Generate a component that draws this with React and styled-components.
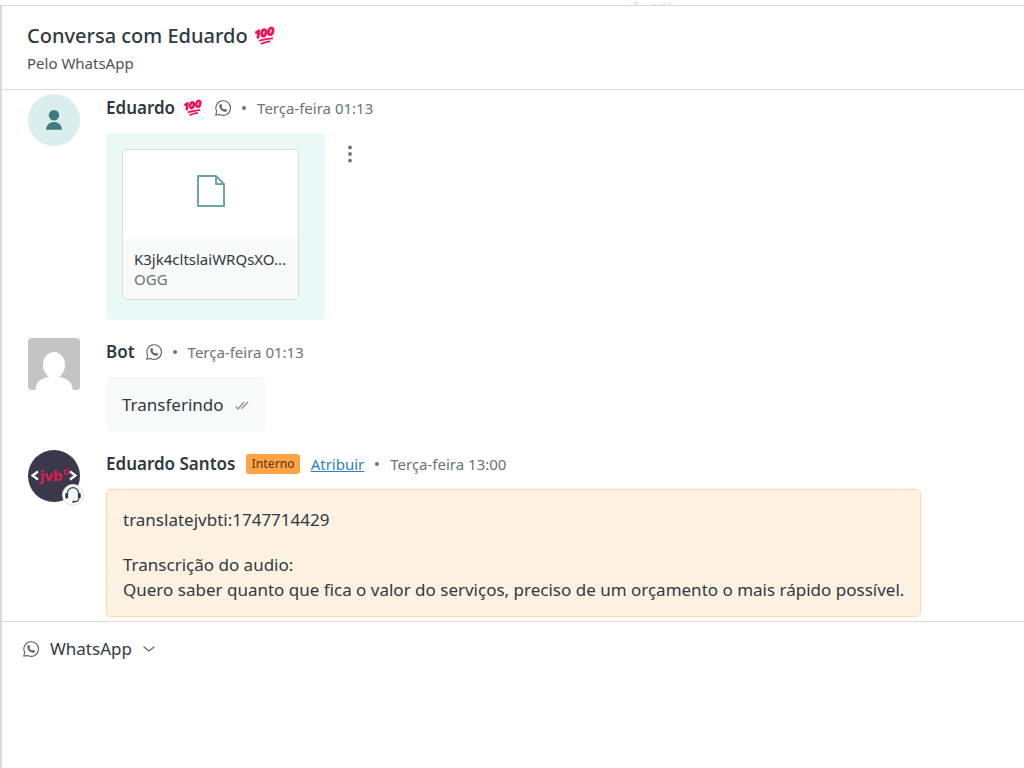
import React from "react";
import styled, { createGlobalStyle } from "styled-components";

const GlobalStyle = createGlobalStyle`
  * {
    box-sizing: border-box;
  }
  body {
    margin: 0;
    background: #ffffff;
    color: #2f3941;
    font-family: "Noto Sans", "Open Sans", sans-serif;
    font-size: 17px;
  }
  h1, h2, p {
    margin: 0;
  }
`;

const Page = styled.div`
  min-height: 100vh;
  display: flex;
  flex-direction: column;
`;

const TopStrip = styled.div`
  height: 5px;
  display: flex;
  justify-content: center;
  padding-left: 280px;
`;

const Panel = styled.main`
  flex: 1;
  display: flex;
  flex-direction: column;
  border-top: 1px solid #d8dcde;
  border-left: 2px solid #d8dcde;
`;

const Header = styled.header`
  padding: 16px 25px 13px;
  border-bottom: 1px solid #d8dcde;
`;

const Title = styled.h1`
  display: flex;
  align-items: center;
  gap: 7px;
  font-size: 20px;
  line-height: 28px;
  font-weight: 500;
`;

const Subtitle = styled.p`
  font-size: 15px;
  line-height: 26px;
  color: #49545c;
`;

const Messages = styled.section`
  display: flex;
  flex-direction: column;
  gap: 18px;
  padding: 4px 26px;
  border-bottom: 1px solid #d8dcde;
`;

const Message = styled.article`
  display: flex;
  align-items: flex-start;
  gap: 26px;
`;

const Avatar = styled.div`
  position: relative;
  flex: none;
  width: 52px;
  height: 52px;
  display: flex;
  align-items: center;
  justify-content: center;
  border-radius: ${(props) => (props.$square ? "4px" : "50%")};
  background: ${(props) => props.$color};
`;

const Badge = styled.div`
  position: absolute;
  right: -4px;
  bottom: -4px;
  width: 22px;
  height: 22px;
  display: flex;
  align-items: center;
  justify-content: center;
  border: 1px solid #e3e6e8;
  border-radius: 50%;
  background: #f8f9f9;
`;

const Body = styled.div`
  min-width: 0;
  display: flex;
  flex-direction: column;
  align-items: flex-start;
  gap: 11px;
`;

const Meta = styled.div`
  display: flex;
  align-items: center;
  gap: 11px;
  height: 28px;
`;

const Name = styled.h2`
  display: flex;
  align-items: center;
  gap: 9px;
  font-size: 17px;
  line-height: 28px;
  font-weight: 600;
`;

const Dot = styled.span`
  width: 4px;
  height: 4px;
  border-radius: 50%;
  background: #68737d;
`;

const Time = styled.time`
  font-size: 15px;
  line-height: 20px;
  color: #68737d;
`;

const Tag = styled.span`
  padding: 0 5px;
  border-radius: 3px;
  background: #ffa445;
  color: #703b15;
  font-size: 12px;
  line-height: 20px;
  font-weight: 500;
`;

const AssignLink = styled.a`
  color: #2f7fc1;
  font-size: 15px;
  line-height: 20px;
`;

const Row = styled.div`
  display: flex;
  align-items: flex-start;
  gap: 16px;
`;

const FileBubble = styled.div`
  padding: 16px 26px 20px 16px;
  border-radius: 5px;
  background: #eaf8f8;
`;

const FileCard = styled.div`
  width: 177px;
  overflow: hidden;
  border: 1px solid #d8dcde;
  border-radius: 5px;
  background: #ffffff;
`;

const FilePreview = styled.div`
  height: 89px;
  display: flex;
  align-items: center;
  justify-content: center;
  padding-bottom: 7px;
`;

const FileInfo = styled.div`
  padding: 10px 11px;
  background: #f8f9f9;
  font-size: 15px;
  line-height: 20px;
`;

const FileName = styled.p`
  overflow: hidden;
  white-space: nowrap;
  text-overflow: ellipsis;
`;

const FileType = styled.p`
  color: #68737d;
`;

const MenuButton = styled.button`
  display: flex;
  padding: 11px 6px;
  border: 0;
  background: none;
`;

const BotBubble = styled.div`
  display: flex;
  align-items: center;
  gap: 11px;
  padding: 15px 16px;
  border-radius: 5px;
  background: #f8f9f9;
  line-height: 25px;
`;

const NoteBubble = styled.div`
  display: flex;
  flex-direction: column;
  gap: 20px;
  padding: 17px 16px 14px;
  border: 1px solid #ffd6a4;
  border-radius: 5px;
  background: #fff2e2;
  line-height: 25px;
`;

const Composer = styled.form`
  flex: 1;
  display: flex;
  flex-direction: column;
  padding: 12px 21px;
`;

const Channel = styled.label`
  display: flex;
  align-items: center;
  align-self: flex-start;
  gap: 11px;
`;

const ChannelSelect = styled.select`
  appearance: none;
  padding: 0;
  border: 0;
  background: none;
  color: #2f3941;
  font: inherit;
  line-height: 30px;
`;

const Reply = styled.textarea`
  flex: 1;
  width: 100%;
  margin-top: 12px;
  padding: 0;
  border: 0;
  outline: 0;
  resize: none;
  background: none;
  font: inherit;
`;

const Hundred = ({ size }) => (
  <svg width={size + 2} height={size} viewBox="0 0 22 20" fill="none" stroke="#f3125a" strokeLinecap="round" aria-label="100">
    <path d="M1.4 6.4 3.8 4.8 3 11.4" strokeWidth="2.8" strokeLinejoin="round" />
    <ellipse cx="8.8" cy="6.9" rx="2" ry="3.3" strokeWidth="2.8" transform="rotate(17 8.8 6.9)" />
    <ellipse cx="15.8" cy="5.3" rx="2.1" ry="3.4" strokeWidth="2.8" transform="rotate(17 15.8 5.3)" />
    <path d="M4.8 14.6Q11 12.8 17.2 12.4M6.6 17.6Q10 16.2 14.6 15.4" strokeWidth="1.9" />
  </svg>
);

const WhatsApp = () => (
  <svg width="16" height="16" viewBox="0 0 16 16" fill="none" aria-hidden="true">
    <path d="M1.7 11.4A7.3 7.3 0 1 1 4.6 14.4L.7 15.3Z" stroke="#5c6770" strokeWidth="1.1" strokeLinejoin="round" />
    <path d="M5.2 4.2 6.2 4 7.2 6 6.5 7C7 8.1 7.9 9 9.1 9.5L10 8.7 12 9.8 11.8 10.9C11.2 11.9 9.9 12 8.7 11.5 6.6 10.7 5.1 9.1 4.4 7.2 4.1 6 4.4 4.9 5.2 4.2Z" fill="#5c6770" />
  </svg>
);

const PersonIcon = () => (
  <svg width="16" height="20" viewBox="0 0 16 20" fill="#417b7b" aria-hidden="true">
    <circle cx="8" cy="5.3" r="5.2" />
    <path d="M0 19.8C.4 15 3.5 12 8 12S15.6 15 16 19.8Z" />
  </svg>
);

const BotIcon = () => (
  <svg width="52" height="52" viewBox="0 0 52 52" fill="#ffffff" aria-hidden="true">
    <ellipse cx="26" cy="27" rx="11" ry="13" />
    <path d="M21 36h10v2.5C38 41 44 42 44.8 52H7.5C8 42 14 41 21 38.5Z" />
  </svg>
);

const JvbLogo = () => (
  <svg width="52" height="52" viewBox="0 0 52 52" aria-hidden="true">
    <path d="M10 21.5 4.5 25.5 10 29.5M42 21.5 47.5 25.5 42 29.5" fill="none" stroke="#ffffff" strokeWidth="2.2" />
    <g fill="#e8194c" fontFamily="Noto Sans, sans-serif" fontWeight="700">
      <text x="12" y="31" fontSize="15">jvb</text>
      <text x="35" y="25" fontSize="8">ti</text>
    </g>
  </svg>
);

const HeadsetIcon = () => (
  <svg width="18" height="18" viewBox="0 0 16 16" fill="none" stroke="#2f3941" aria-hidden="true">
    <path d="M3 8V6.5a5 5 0 0 1 10 0V8" strokeWidth="1.1" />
    <path d="M2.4 7.5v2.6M13.6 7.5v2.6" strokeWidth="2.6" strokeLinecap="round" />
    <path d="M13 11.500q0 2.500-4.500 2.500" strokeWidth="1.100" />
    <path d="M7.500 14h1.800" strokeWidth="1.800" />
  </svg>
);

const FileIcon = () => (
  <svg width="30" height="32" viewBox="0 0 30 32" fill="none" stroke="#6aa5a8" strokeWidth="2" strokeLinejoin="round" aria-hidden="true">
    <path d="M2 1h18l8 8v22H2Z" />
    <path d="M20 1v8h8" />
  </svg>
);

const DotsIcon = () => (
  <svg width="6" height="20" viewBox="0 0 6 20" fill="#68737d" aria-hidden="true">
    <circle cx="3" cy="3.4" r="1.9" />
    <circle cx="3" cy="10" r="1.9" />
    <circle cx="3" cy="16.6" r="1.9" />
  </svg>
);

const ChecksIcon = () => (
  <svg width="14" height="10" viewBox="0 0 14 10" fill="none" stroke="#87929d" strokeWidth="1.3" aria-hidden="true">
    <path d="M.7 6.5 3 9 9 2M6.5 8.8 13 2" />
  </svg>
);

const ChevronIcon = () => (
  <svg width="12" height="6" viewBox="0 0 12 6" fill="none" stroke="#5c6770" strokeWidth="1.3" strokeLinecap="round" aria-hidden="true">
    <path d="M1 1 6 5 11 1" />
  </svg>
);

const App = () => {
  return (
    <Page>
      <GlobalStyle />
      <TopStrip>
        <svg width="42" height="5" viewBox="0 0 42 5" fill="#fbdfe6" aria-hidden="true">
          <path d="M3 2 5 1 7 2V5H3ZM21 4h4v1h-4ZM29 4h4v1h-4ZM33 3h2v2h-2ZM38 2h2v3h-2Z" />
        </svg>
      </TopStrip>
      <Panel>
        <Header>
          <Title>
            Conversa com Eduardo
            <Hundred size={20} />
          </Title>
          <Subtitle>Pelo WhatsApp</Subtitle>
        </Header>

        <Messages>
          <Message>
            <Avatar $color="#daeeed">
              <PersonIcon />
            </Avatar>
            <Body>
              <Meta>
                <Name>
                  Eduardo
                  <Hundred size={18} />
                </Name>
                <WhatsApp />
                <Dot />
                <Time>Terça-feira 01:13</Time>
              </Meta>
              <Row>
                <FileBubble>
                  <FileCard>
                    <FilePreview>
                      <FileIcon />
                    </FilePreview>
                    <FileInfo>
                      <FileName>K3jk4cltslaiWRQsXO...</FileName>
                      <FileType>OGG</FileType>
                    </FileInfo>
                  </FileCard>
                </FileBubble>
                <MenuButton type="button" aria-label="Mais opções">
                  <DotsIcon />
                </MenuButton>
              </Row>
            </Body>
          </Message>

          <Message>
            <Avatar $square $color="#c4c4c4">
              <BotIcon />
            </Avatar>
            <Body>
              <Meta>
                <Name>Bot</Name>
                <WhatsApp />
                <Dot />
                <Time>Terça-feira 01:13</Time>
              </Meta>
              <BotBubble>
                <p>Transferindo</p>
                <ChecksIcon />
              </BotBubble>
            </Body>
          </Message>

          <Message>
            <Avatar $color="#3b384c">
              <JvbLogo />
              <Badge>
                <HeadsetIcon />
              </Badge>
            </Avatar>
            <Body>
              <Meta>
                <Name>Eduardo Santos</Name>
                <Tag>Interno</Tag>
                <AssignLink href="#atribuir">Atribuir</AssignLink>
                <Dot />
                <Time>Terça-feira 13:00</Time>
              </Meta>
              <NoteBubble>
                <p>translatejvbti:1747714429</p>
                <p>
                  Transcrição do audio:
                  <br />
                  Quero saber quanto que fica o valor do serviços, preciso de um orçamento o mais rápido possível.
                </p>
              </NoteBubble>
            </Body>
          </Message>
        </Messages>

        <Composer>
          <Channel>
            <WhatsApp />
            <ChannelSelect aria-label="Canal">
              <option>WhatsApp</option>
            </ChannelSelect>
            <ChevronIcon />
          </Channel>
          <Reply aria-label="Resposta" />
        </Composer>
      </Panel>
    </Page>
  );
};

export default App;
